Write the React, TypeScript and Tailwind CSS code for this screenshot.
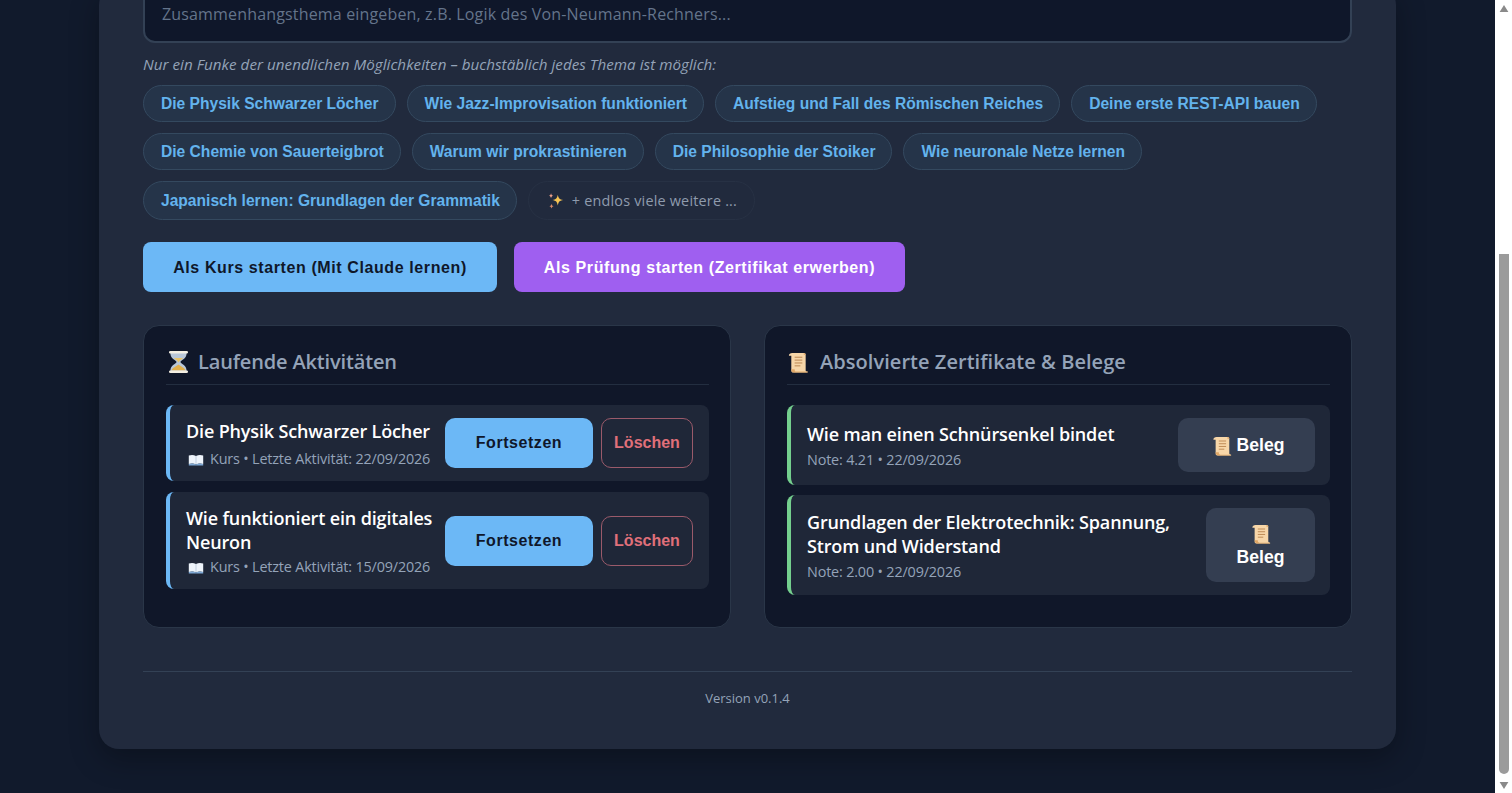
const topics = [
  'Die Physik Schwarzer Löcher',
  'Wie Jazz-Improvisation funktioniert',
  'Aufstieg und Fall des Römischen Reiches',
  'Deine erste REST-API bauen',
  'Die Chemie von Sauerteigbrot',
  'Warum wir prokrastinieren',
  'Die Philosophie der Stoiker',
  'Wie neuronale Netze lernen',
  'Japanisch lernen: Grundlagen der Grammatik',
]

const HourglassIcon = () => (
  <svg viewBox="3 1 14 22" preserveAspectRatio="none" className="h-[22px] w-[19px] shrink-0">
    <path d="M4 3h12c0 6-4 7-4.600 9 .6 2 4.600 3 4.600 9H4c0-6 4-7 4.600-9C8 10 4 9 4 3z" fill="#b9c7d8" />
    <path d="M6.500 8h7c-1 1.500-3 2.500-3.500 4.500C9.500 10.500 7.500 9.500 6.500 8z" fill="#e9c46a" />
    <path d="M4.800 20.500c.8-3 3.500-4 5.200-6 1.700 2 4.400 3 5.200 6z" fill="#e3b04b" />
    <rect x="3" y="1" width="14" height="2.400" rx="1" fill="#f4efe3" />
    <rect x="3" y="20.600" width="14" height="2.400" rx="1" fill="#f4efe3" />
  </svg>
)

const ScrollIcon = ({ className }: { className: string }) => (
  <svg viewBox="0 0 22 24" className={className}>
    <path d="M5 2h12c1 0 2 .6 2 1.500V20c0 1 .6 1.500 2 1.500V22.500H6c-1.500 0-2-1-2-2.500V5H1.500C1.500 3 3 2 5 2z" fill="#f7d6a8" />
    <path d="M17 2c1.500 0 2 .8 2 2H17zM4 19c0 2 1 3.500 3 3.500h14v-1H9c-1 0-1.500-1-1.500-2.500z" fill="#e0a766" />
    <path d="M7.500 6.500h8M7.500 9.500h8M7.500 12.500h8M7.500 15.500h6" stroke="#b98550" strokeWidth="1" />
  </svg>
)

const BookIcon = () => (
  <svg viewBox="0 0 20 16" className="ml-[2px] mt-[2px] h-[14px] w-[16px] shrink-0">
    <path d="M1 2.500c3-1 6-1 9 .5 3-1.500 6-1.500 9-.5V13c-3-1-6-1-9 .5C7 12 4 12 1 13z" fill="#eef4fb" />
    <path d="M10 3v10.500" stroke="#a9bccf" strokeWidth=".8" />
    <path d="M1 13c3-1 6-1 9 .5 3-1.500 6-1.500 9-.5v2H1z" fill="#7fa9d6" />
  </svg>
)

const SparklesIcon = () => (
  <svg viewBox="0 0 20 20" className="h-[18px] w-[18px] shrink-0">
    <path d="M12 3c.8 4 1.800 5.200 6 6-4.200.8-5.200 2-6 6-.8-4-1.800-5.200-6-6 4.200-.8 5.200-2 6-6z" fill="#f6c453" />
    <path d="M4.500 1.500c.4 1.800.9 2.300 2.500 2.700-1.600.4-2.100.9-2.500 2.700C4.100 5.100 3.600 4.600 2 4.200c1.600-.4 2.100-.9 2.500-2.700z" fill="#f3a38b" />
    <path d="M5 13c.4 1.800.9 2.300 2.500 2.700-1.600.4-2.100.9-2.500 2.700-.4-1.800-.9-2.300-2.500-2.700C4.100 15.300 4.600 14.800 5 13z" fill="#d98a6a" />
  </svg>
)

const RunningItem = ({ title, date }: { title: string; date: string }) => (
  <div className="flex items-center gap-2 rounded-lg border-l-4 border-[#6cb8f6] bg-[#1f2738] py-[13px] pl-[16px] pr-[16px]">
    <div className="flex min-w-0 flex-1 flex-col justify-between self-stretch pt-[1px]">
      <div className="text-[18px] font-semibold leading-[24px] tracking-[-0.15px] text-white">{title}</div>
      <div className="mt-[4px] flex items-center gap-[6px] text-[14.4px] leading-[18px] tracking-[-0.17px] text-[#94a3b8]">
        <BookIcon />
        <span>Kurs • Letzte Aktivität: {date}</span>
      </div>
    </div>
    <button className="h-[50px] w-[148px] shrink-0 rounded-[10px] bg-[#6cb8f6] font-['Liberation_Sans',sans-serif] text-[16px] font-bold tracking-[0.55px] text-[#0f172a]">
      Fortsetzen
    </button>
    <button className="h-[50px] w-[92px] shrink-0 rounded-[10px] border border-[#9a5a6a] font-['Liberation_Sans',sans-serif] text-[16px] font-bold text-[#e0707a]">
      Löschen
    </button>
  </div>
)

const CertItem = ({ title, meta, wrap }: { title: string; meta: string; wrap?: boolean }) => (
  <div className="flex items-center gap-2 rounded-lg border-l-4 border-[#74cf8e] bg-[#1f2738] py-[13px] pl-[16px] pr-[15px]">
    <div className="min-w-0 flex-1 pt-[2px]">
      <div className="text-[18px] font-semibold leading-[24px] tracking-[-0.15px] text-white">{title}</div>
      <div className="mt-[4px] text-[14.4px] leading-[20px] tracking-[-0.17px] text-[#94a3b8]">{meta}</div>
    </div>
    {wrap ? (
      <button className="flex h-[74px] w-[109px] shrink-0 flex-col items-center justify-center rounded-[10px] bg-[#343e51] pt-[1px] font-['Liberation_Sans',sans-serif] text-[17.6px] font-bold leading-[21px] text-white">
        <ScrollIcon className="h-[22px] w-[20px]" />
        <span className="mt-[2px]">Beleg</span>
      </button>
    ) : (
      <button className="flex h-[54px] w-[137px] shrink-0 items-center justify-center gap-[5px] rounded-[10px] bg-[#343e51] pl-[3px] pt-[1px] font-['Liberation_Sans',sans-serif] text-[17.6px] font-bold text-white">
        <ScrollIcon className="h-[22px] w-[20px]" />
        <span>Beleg</span>
      </button>
    )}
  </div>
)

const Scrollbar = () => (
  <div className="flex h-full w-[17px] shrink-0 flex-col items-center bg-white">
    <svg viewBox="0 0 10 8" className="mt-[5px] h-[7px] w-[10px]">
      <path d="M5 0l5 8H0z" fill="#8a8a8a" />
    </svg>
    <div className="flex-1" />
    <div className="h-[520px] w-[10px] rounded-b-[5px] bg-[#9b9b9b]" />
    <svg viewBox="0 0 10 8" className="mb-[4px] mt-[8px] h-[7px] w-[10px]">
      <path d="M5 8L0 0h10z" fill="#8a8a8a" />
    </svg>
  </div>
)

export default function App() {
  return (
    <div className="flex h-screen overflow-hidden bg-[#111a2c] font-['Open_Sans',sans-serif]">
      <main className="flex min-w-0 flex-1 flex-col justify-end overflow-hidden pb-[44px]">
        <div className="mx-auto w-[1297px] shrink-0 rounded-[20px] bg-[#212a3d] px-[44px] pb-[41px] shadow-[0_10px_30px_rgba(0,0,0,0.3)]">
          <input
            readOnly
            placeholder="Zusammenhangsthema eingeben, z.B. Logik des Von-Neumann-Rechners..."
            className="block h-[58px] w-full rounded-xl border-2 border-[#334155] bg-[#0f172a] px-[17px] text-[16px] tracking-[0.16px] text-white outline-none placeholder:text-[#64748b]"
          />

          <p className="mt-[11px] text-[15.2px] italic leading-[20px] tracking-[0.03px] text-[#94a3b8]">
            Nur ein Funke der unendlichen Möglichkeiten – buchstäblich jedes Thema ist möglich:
          </p>

          <div className="mt-[11px] flex flex-wrap gap-x-[11px] gap-y-[11px]">
            {topics.map((t) => (
              <button
                key={t}
                className="h-auto min-h-[37px] rounded-full border border-[#34495f] bg-[#253449] pl-[17px] pr-[16px] font-['Liberation_Sans',sans-serif] text-[15.6px] font-bold text-[#63b3ed]"
              >
                {t}
              </button>
            ))}
            <div className="flex h-[39px] items-center gap-[7px] rounded-full border border-[#273144] pl-[18px] pr-[17px] pt-[1px] text-[14.4px] tracking-[0.2px] text-[#8f9bad]">
              <SparklesIcon />
              <span>+ endlos viele weitere ...</span>
            </div>
          </div>

          <div className="mt-[22px] flex gap-[17px]">
            <button className="h-[50px] w-[354px] rounded-lg bg-[#6cb8f6] pt-[1px] font-['Liberation_Sans',sans-serif] text-[16px] font-bold tracking-[0.6px] text-[#0f172a]">
              Als Kurs starten (Mit Claude lernen)
            </button>
            <button className="h-[50px] w-[391px] rounded-lg bg-[#9f5ff0] pt-[1px] font-['Liberation_Sans',sans-serif] text-[16px] font-bold tracking-[0.6px] text-white">
              Als Prüfung starten (Zertifikat erwerben)
            </button>
          </div>

          <div className="mt-[33px] grid grid-cols-2 gap-[33px]">
            <section className="h-[303px] rounded-2xl border border-[#2a3648] bg-[#101729] pl-[22px] pr-[21px] pt-[21px]">
              <h2 className="flex items-center gap-[10px] border-b border-[#232e40] pb-[7px] pl-[3px] text-[20px] font-semibold leading-[30px] tracking-[-0.15px] text-[#94a3b8]">
                <HourglassIcon />
                Laufende Aktivitäten
              </h2>
              <div className="mt-[20px] flex flex-col gap-[11px]">
                <RunningItem title="Die Physik Schwarzer Löcher" date="22/09/2026" />
                <RunningItem title="Wie funktioniert ein digitales Neuron" date="15/09/2026" />
              </div>
            </section>

            <section className="h-[303px] rounded-2xl border border-[#2a3648] bg-[#101729] pl-[22px] pr-[21px] pt-[21px]">
              <h2 className="flex items-center gap-[11px] border-b border-[#232e40] pb-[7px] text-[20px] font-semibold leading-[30px] tracking-[0.05px] text-[#94a3b8]">
                <ScrollIcon className="h-[23px] w-[22px] shrink-0" />
                Absolvierte Zertifikate &amp; Belege
              </h2>
              <div className="mt-[20px] flex flex-col gap-[10px]">
                <CertItem title="Wie man einen Schnürsenkel bindet" meta="Note: 4.21 • 22/09/2026" />
                <CertItem
                  title="Grundlagen der Elektrotechnik: Spannung, Strom und Widerstand"
                  meta="Note: 2.00 • 22/09/2026"
                  wrap
                />
              </div>
            </section>
          </div>

          <footer className="mt-[43px] border-t border-[#334155] pt-[16px] text-center text-[13px] leading-[20px] text-[#94a3b8]">
            Version v0.1.4
          </footer>
        </div>
      </main>
      <Scrollbar />
    </div>
  )
}
